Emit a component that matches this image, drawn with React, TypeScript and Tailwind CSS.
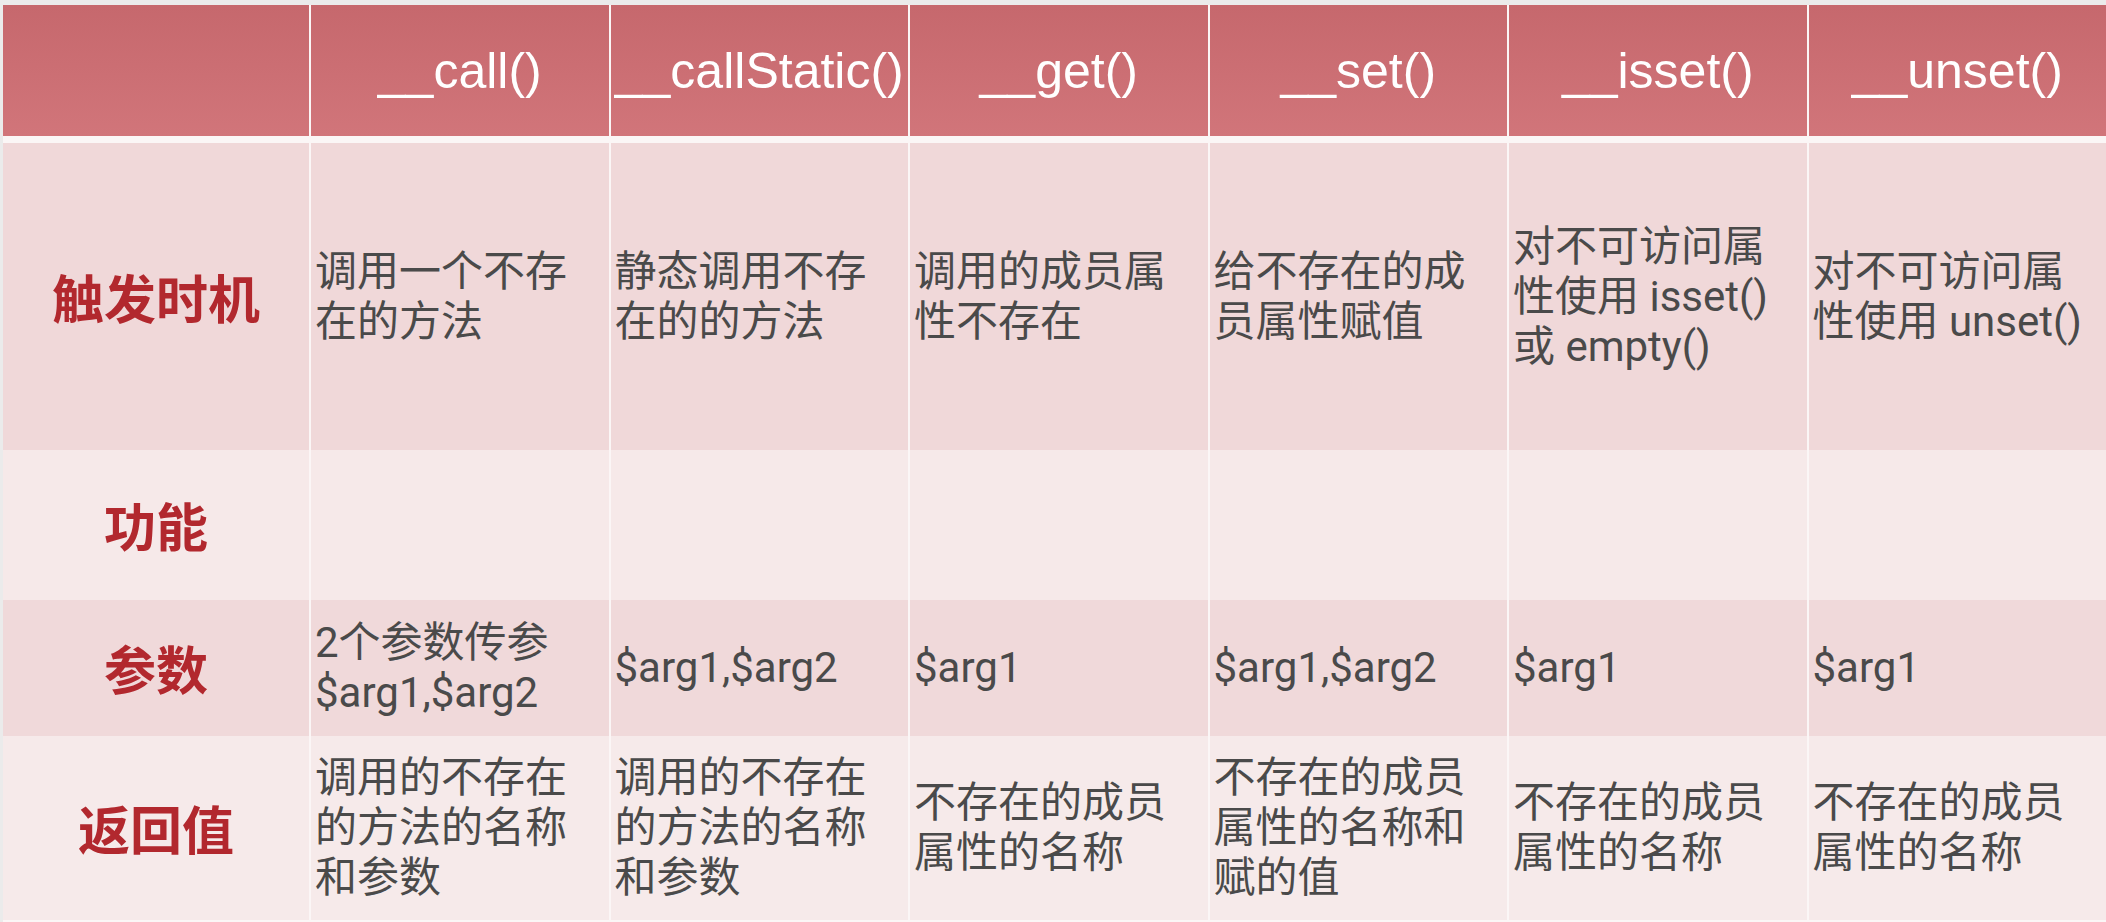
import React from 'react';

const headers = ['__call()', '__callStatic()', '__get()', '__set()', '__isset()', '__unset()'];

type Row = { label: string; height: string; bg: string; cells: string[][] };

const rows: Row[] = [
  {
    label: '触发时机',
    height: 'h-[307px]',
    bg: 'bg-[#f0d8d9]',
    cells: [
      ['调用一个不存', '在的方法'],
      ['静态调用不存', '在的的方法'],
      ['调用的成员属', '性不存在'],
      ['给不存在的成', '员属性赋值'],
      ['对不可访问属', '性使用 isset()', '或 empty()'],
      ['对不可访问属', '性使用 unset()'],
    ],
  },
  {
    label: '功能',
    height: 'h-[150px]',
    bg: 'bg-[#f6e9e9]',
    cells: [[], [], [], [], [], []],
  },
  {
    label: '参数',
    height: 'h-[136px]',
    bg: 'bg-[#f0d9da]',
    cells: [
      ['2个参数传参', '$arg1,$arg2'],
      ['$arg1,$arg2'],
      ['$arg1'],
      ['$arg1,$arg2'],
      ['$arg1'],
      ['$arg1'],
    ],
  },
  {
    label: '返回值',
    height: 'h-[184px]',
    bg: 'bg-[#f6eaea]',
    cells: [
      ['调用的不存在', '的方法的名称', '和参数'],
      ['调用的不存在', '的方法的名称', '和参数'],
      ['不存在的成员', '属性的名称'],
      ['不存在的成员', '属性的名称和', '赋的值'],
      ['不存在的成员', '属性的名称'],
      ['不存在的成员', '属性的名称'],
    ],
  },
];

const bodyFont = { fontFamily: 'Roboto, "Noto Sans CJK SC", sans-serif' };

export default function App() {
  return (
    <div className="w-[2106px] h-[922px] overflow-hidden bg-[#ebebeb] pt-[5px] pl-[3px]">
      <div className="flex flex-col gap-[7px] bg-[#fbf6f6] h-full">
        {/* Header */}
        <div className="grid grid-cols-[306px_repeat(6,minmax(0,1fr))] gap-x-[2px] h-[131px]">
          <div className="bg-linear-to-b from-[#c6686d] to-[#d1757a]" />
          {headers.map((h) => (
            <div
              key={h}
              className="bg-linear-to-b from-[#c6686d] to-[#d1757a] flex items-center justify-center pt-[2px] text-white text-[50px] whitespace-nowrap"
              style={{ fontFamily: '"Liberation Sans", Arial, sans-serif' }}
            >
              {h}
            </div>
          ))}
        </div>

        {/* Body */}
        <div className="flex flex-col">
          {rows.map((r) => (
            <div key={r.label} className={`grid grid-cols-[306px_repeat(6,minmax(0,1fr))] gap-x-[2px] ${r.height}`}>
              <div
                className={`${r.bg} flex items-center justify-center text-[52px] font-bold text-[#b2282e]`}
                style={{ fontFamily: '"Noto Sans CJK SC", sans-serif' }}
              >
                {r.label}
              </div>
              {r.cells.map((lines, i) => (
                <div
                  key={i}
                  className={`${r.bg} flex flex-col justify-center pl-[4px] pr-3 text-[42px] leading-[50px] text-[#4a4a4a]`}
                  style={bodyFont}
                >
                  {lines.map((l) => (
                    <div key={l} className="whitespace-nowrap">{l}</div>
                  ))}
                </div>
              ))}
            </div>
          ))}
        </div>
      </div>
    </div>
  );
}
